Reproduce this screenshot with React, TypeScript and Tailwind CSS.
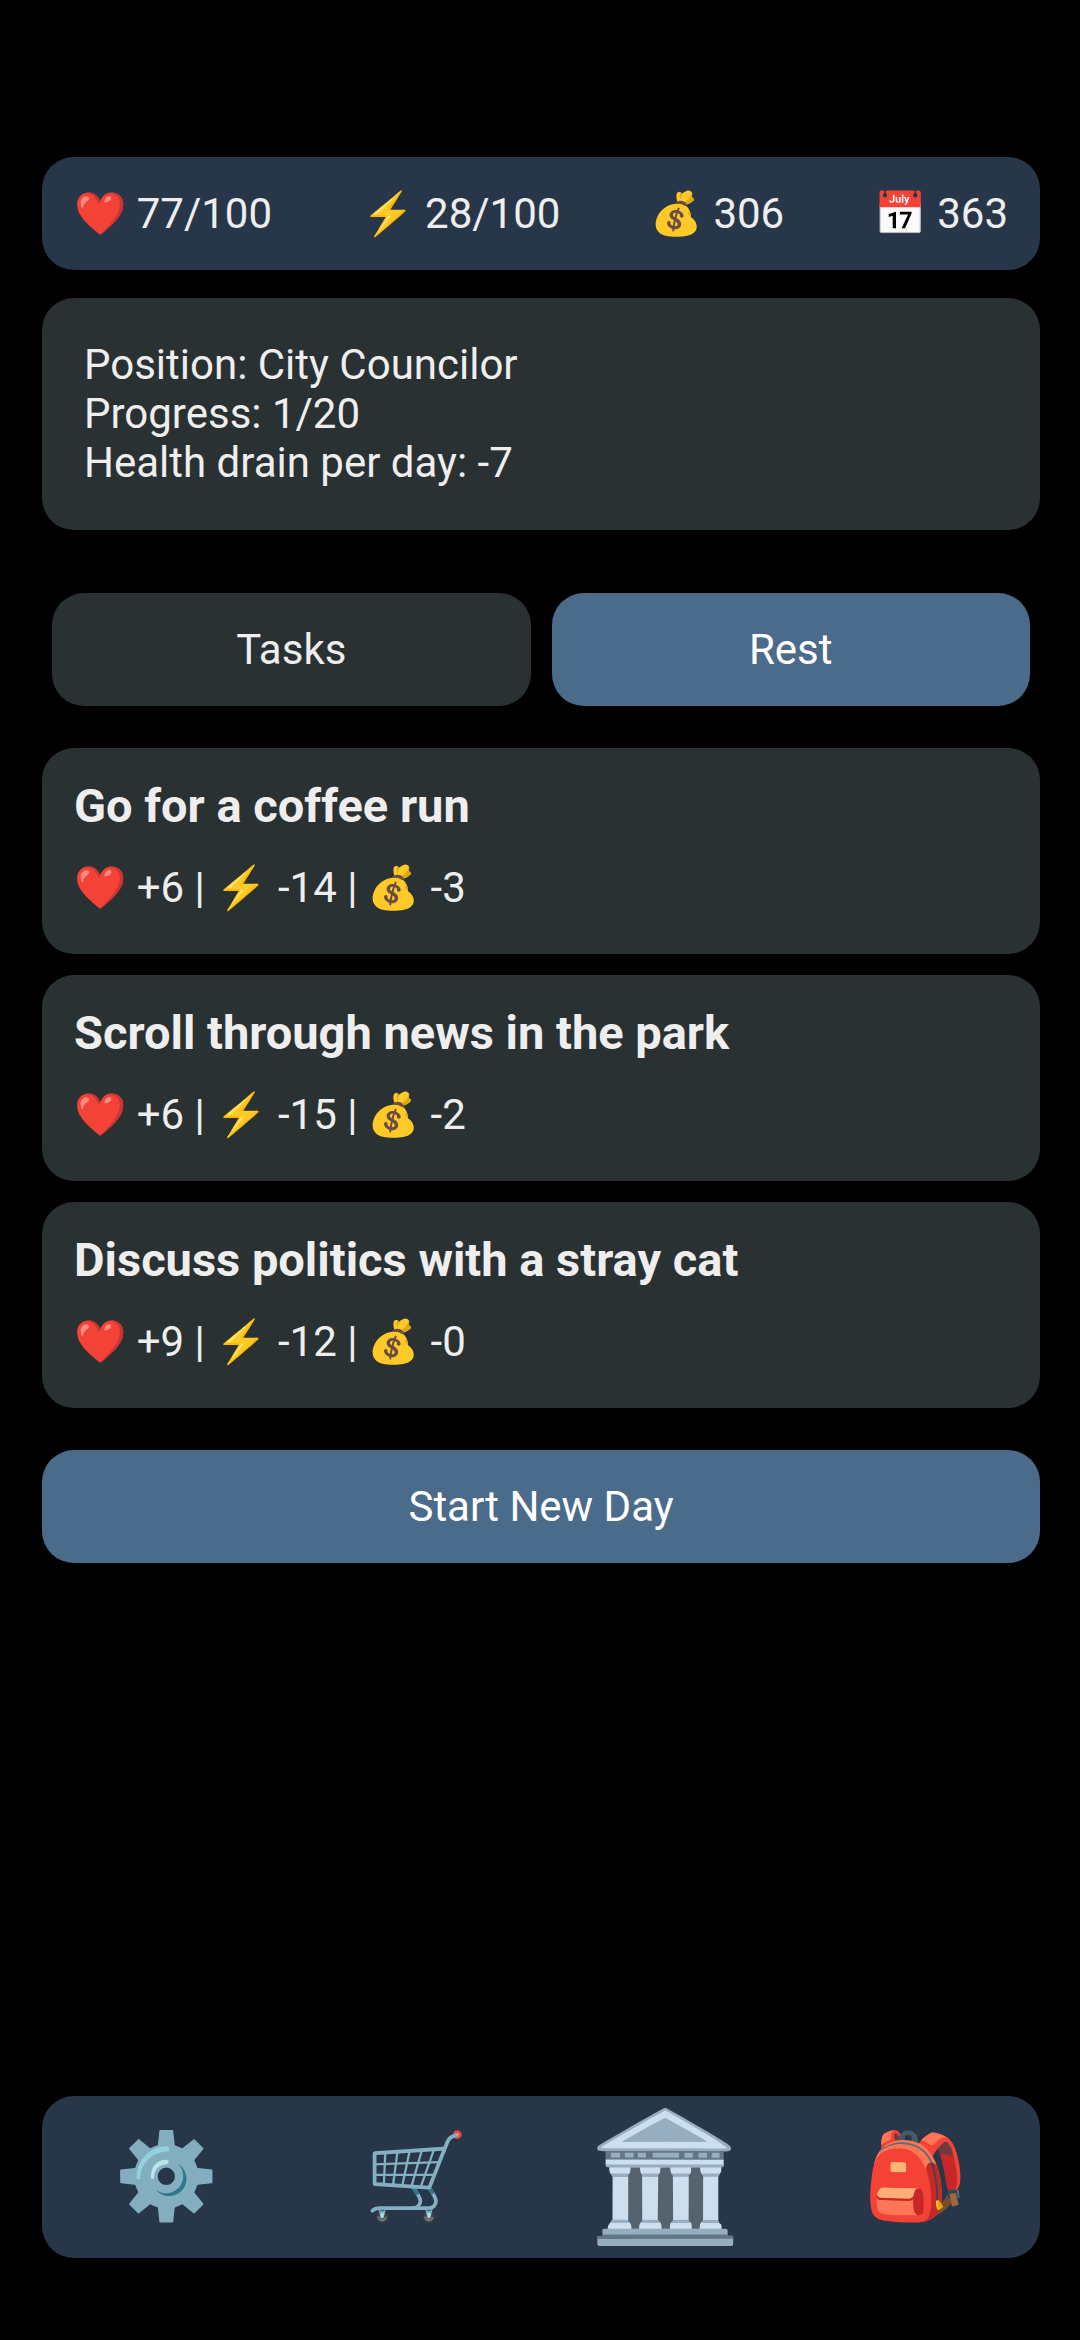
const stats = [
  { icon: "❤️", label: "Health", value: "77/100" },
  { icon: "⚡", label: "Energy", value: "28/100" },
  { icon: "💰", label: "Money", value: "306" },
  { icon: "📅", label: "Day", value: "363" },
];

const activities = [
  { title: "Go for a coffee run", effects: "❤️ +6 | ⚡ -14 | 💰 -3" },
  { title: "Scroll through news in the park", effects: "❤️ +6 | ⚡ -15 | 💰 -2" },
  { title: "Discuss politics with a stray cat", effects: "❤️ +9 | ⚡ -12 | 💰 -0" },
];

const navItems = [
  { icon: "⚙️", label: "Settings", active: false },
  { icon: "🛒", label: "Shop", active: false },
  { icon: "🏛️", label: "Career", active: true },
  { icon: "🎒", label: "Inventory", active: false },
];

export default function App() {
  return (
    <div className="flex min-h-screen flex-col bg-black pt-[157px] pr-10 pb-[82px] pl-[42px] font-['Roboto','Noto_Color_Emoji',sans-serif] text-[42px] leading-[49px] text-[#eeeeee]">
      <header className="flex justify-between rounded-[32px] bg-[#273749] p-8">
        {stats.map((s) => (
          <span key={s.label} title={s.label} className="whitespace-nowrap">
            {s.icon} {s.value}
          </span>
        ))}
      </header>

      <main className="flex flex-col">
        <section className="mt-7 rounded-[32px] bg-[#293133] px-[42px] pt-[42px] pb-[43px]">
          <p>Position: City Councilor</p>
          <p>Progress: 1/20</p>
          <p>Health drain per day: -7</p>
        </section>

        <div className="mt-[63px] grid grid-cols-2 gap-[21px] px-[10px]">
          <button type="button" className="rounded-[32px] bg-[#293133] p-8">
            Tasks
          </button>
          <button type="button" aria-pressed="true" className="rounded-[32px] bg-[#4a6b8a] p-8 text-white">
            Rest
          </button>
        </div>

        <div className="mt-[42px] flex flex-col gap-[21px]">
          {activities.map((a) => (
            <button
              key={a.title}
              type="button"
              className="rounded-[32px] bg-[#293133] px-8 pt-[30px] pb-[42px] text-left"
            >
              <span className="mb-[30px] block text-[47px] leading-[55px] font-bold">{a.title}</span>
              <span className="block">{a.effects}</span>
            </button>
          ))}
        </div>

        <button type="button" className="mt-[42px] rounded-[32px] bg-[#4a6b8a] p-8 text-white">
          Start New Day
        </button>
      </main>

      <nav className="mt-auto grid h-[162px] grid-cols-4 rounded-[32px] bg-[#273749]">
        {navItems.map((n) => (
          <button
            key={n.label}
            type="button"
            aria-label={n.label}
            className={
              n.active
                ? "flex items-center justify-center text-[126px] leading-[148px]"
                : "flex items-center justify-center text-[84px] leading-[98px]"
            }
          >
            {n.icon}
          </button>
        ))}
      </nav>
    </div>
  );
}
